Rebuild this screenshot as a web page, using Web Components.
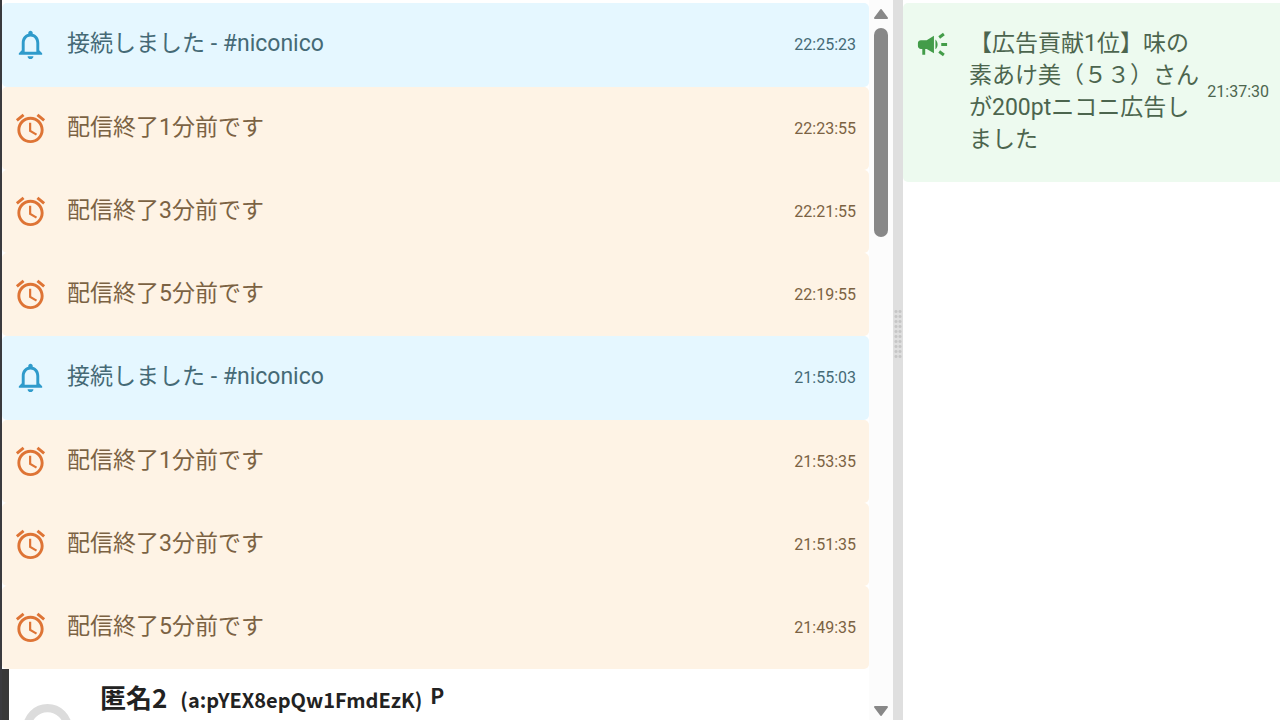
<!DOCTYPE html>
<html lang="ja">
<head>
<meta charset="utf-8">
<title>コメント一覧</title>
<style>
  body { margin: 0; background: #fff; font-family: Roboto, "Noto Sans CJK JP", sans-serif; }
</style>
</head>
<body>
<comment-viewer>
  <notice-row kind="info" time="22:25:23">接続しました - #niconico</notice-row>
  <notice-row kind="alarm" time="22:23:55">配信終了1分前です</notice-row>
  <notice-row kind="alarm" time="22:21:55">配信終了3分前です</notice-row>
  <notice-row kind="alarm" time="22:19:55">配信終了5分前です</notice-row>
  <notice-row kind="info" time="21:55:03">接続しました - #niconico</notice-row>
  <notice-row kind="alarm" time="21:53:35">配信終了1分前です</notice-row>
  <notice-row kind="alarm" time="21:51:35">配信終了3分前です</notice-row>
  <notice-row kind="alarm" time="21:49:35">配信終了5分前です</notice-row>
  <user-comment name="匿名2" user-id="a:pYEX8epQw1FmdEzK" badge="P"></user-comment>
  <notice-row slot="side" kind="ad" time="21:37:30">【広告貢献1位】味の素あけ美（５３）さんが200ptニコニ広告しました</notice-row>
</comment-viewer>

<script>
const ICONS = {
  info: "M12 22c1.1 0 2-.9 2-2h-4c0 1.1.89 2 2 2zm6-6v-5c0-3.07-1.63-5.64-4.5-6.32V4c0-.83-.67-1.5-1.5-1.5s-1.5.67-1.5 1.5v.68C7.64 5.36 6 7.92 6 11v5l-2 2v1h16v-1l-2-2zm-2 1H8v-6c0-2.48 1.51-4.5 4-4.5s4 2.02 4 4.5v6z",
  alarm: "M22 5.72l-4.6-3.86-1.29 1.53 4.6 3.86L22 5.72zM7.88 3.39L6.6 1.86 2 5.71l1.29 1.53 4.59-3.85zM12.5 8H11v6l4.75 2.85.75-1.23-4-2.37V8zM12 4c-4.97 0-9 4.03-9 9s4.02 9 9 9c4.97 0 9-4.03 9-9s-4.03-9-9-9zm0 16c-3.87 0-7-3.13-7-7s3.13-7 7-7 7 3.13 7 7-3.13 7-7 7z",
  ad: "M18 11v2h4v-2h-4zm-2 6.61c.96.71 2.21 1.65 3.2 2.39.4-.53.8-1.07 1.2-1.6-.99-.74-2.24-1.68-3.2-2.4-.4.54-.8 1.08-1.2 1.61zM20.4 5.6c-.4-.53-.8-1.07-1.2-1.6-.99.74-2.24 1.68-3.2 2.4.4.53.8 1.07 1.2 1.6.96-.72 2.21-1.65 3.2-2.4zM4 9c-1.1 0-2 .9-2 2v2c0 1.1.9 2 2 2h1v4h2v-4h1l5 3V6L8 9H4zm11.5 3c0-1.33-.58-2.53-1.5-3.35v6.69c.92-.81 1.5-2.01 1.5-3.34z"
};

class NoticeRow extends HTMLElement {
  constructor() {
    super();
    this.attachShadow({ mode: "open" });
  }

  connectedCallback() {
    const kind = this.getAttribute("kind") || "info";
    const time = this.getAttribute("time") || "";
    this.shadowRoot.innerHTML = `
      <style>
        :host { display: flex; align-items: flex-start; padding: 24px 13px 24px 11px; border-radius: 5px; }
        :host([kind="info"]) { background: #e5f7ff; color: #456a76; --icon: #2f9bcb; padding-bottom: 25px; }
        :host([kind="alarm"]) { background: #fef3e5; color: #7b6243; --icon: #de7435; }
        :host([kind="ad"]) { background: #edfaef; color: #4c654e; --icon: #439c49; padding: 24px 11px 26px 12px; border-radius: 5px 0 0 5px; }
        svg { flex: none; width: 35px; height: 35px; margin-right: 19px; fill: var(--icon); }
        .text { flex: 1; min-width: 0; padding-top: 1px; font-size: 23px; line-height: 32px; }
        time { align-self: center; margin-left: 6px; font-size: 16px; line-height: 20px; }
      </style>
      <svg viewBox="0 0 24 24" aria-hidden="true"><path d="${ICONS[kind]}"/></svg>
      <div class="text"><slot></slot></div>
      <time>${time}</time>
    `;
  }
}

class UserComment extends HTMLElement {
  constructor() {
    super();
    this.attachShadow({ mode: "open" });
  }

  connectedCallback() {
    this.shadowRoot.innerHTML = `
      <style>
        :host { display: flex; align-items: flex-start; gap: 28px; padding: 10px 12px 24px 14px; border-left: 7px solid #383838;
          background: #fff; color: #222; font-family: "Noto Sans CJK JP", sans-serif; font-weight: 700; }
        .avatar { flex: none; width: 49px; height: 49px; margin-top: 25px; }
        .head { display: flex; align-items: baseline; line-height: 36px; }
        .name { font-size: 26px; }
        .id { margin-left: 13px; font-size: 20px; }
        .badge { align-self: flex-start; margin-left: 8px; font-size: 21px; line-height: 32px; }
      </style>
      <svg class="avatar" viewBox="0 0 48 48" aria-hidden="true">
        <circle cx="24" cy="24" r="20" fill="none" stroke="#dcdcdc" stroke-width="8"/>
      </svg>
      <div class="head">
        <span class="name">${this.getAttribute("name")}</span>
        <span class="id">(${this.getAttribute("user-id")})</span>
        <span class="badge">${this.getAttribute("badge")}</span>
      </div>
    `;
  }
}

class ListScrollbar extends HTMLElement {
  constructor() {
    super();
    this.attachShadow({ mode: "open" }).innerHTML = `
      <style>
        :host { display: flex; flex-direction: column; align-items: center; width: 24px; background: #fcfcfc; }
        button { display: flex; justify-content: center; align-items: center; width: 24px; height: 28px; margin: 0; padding: 0; border: 0; background: none; }
        .down { height: 18px; }
        svg { width: 16px; height: 12px; fill: #888; stroke: #888; stroke-width: 2; stroke-linejoin: round; }
        .track { flex: 1; min-height: 0; }
        .thumb { width: 14px; height: 31%; border-radius: 7px; background: #888; }
      </style>
      <button type="button" aria-label="上へ"><svg viewBox="0 0 16 12"><path d="M8 2l6 8H2z"/></svg></button>
      <div class="track"><div class="thumb"></div></div>
      <button type="button" class="down" aria-label="下へ"><svg viewBox="0 0 16 12"><path d="M8 10l6-8H2z"/></svg></button>
    `;
  }
}

class PaneSplitter extends HTMLElement {
  constructor() {
    super();
    this.attachShadow({ mode: "open" }).innerHTML = `
      <style>
        :host { display: flex; align-items: center; justify-content: center; width: 10px; background: #dfdfdf; cursor: col-resize; }
        .grip { width: 8px; height: 50px; margin-bottom: 52px;
          background: radial-gradient(circle, #c6c6c6 1px, transparent 2px) 0 0 / 4px 5px; }
      </style>
      <div class="grip"></div>
    `;
  }
}

class CommentViewer extends HTMLElement {
  constructor() {
    super();
    this.attachShadow({ mode: "open" }).innerHTML = `
      <style>
        :host { display: grid; grid-template-columns: minmax(0, 1fr) 24px 10px minmax(0, 377px); height: 100vh; overflow: hidden; }
        .list { min-height: 0; padding-top: 3px; overflow: hidden; border-left: 2px solid #3a3a3e; }
        .side { min-height: 0; padding-top: 3px; overflow: hidden; }
      </style>
      <main class="list"><slot></slot></main>
      <list-scrollbar></list-scrollbar>
      <pane-splitter></pane-splitter>
      <aside class="side"><slot name="side"></slot></aside>
    `;
  }
}

customElements.define("notice-row", NoticeRow);
customElements.define("user-comment", UserComment);
customElements.define("list-scrollbar", ListScrollbar);
customElements.define("pane-splitter", PaneSplitter);
customElements.define("comment-viewer", CommentViewer);
</script>
</body>
</html>
